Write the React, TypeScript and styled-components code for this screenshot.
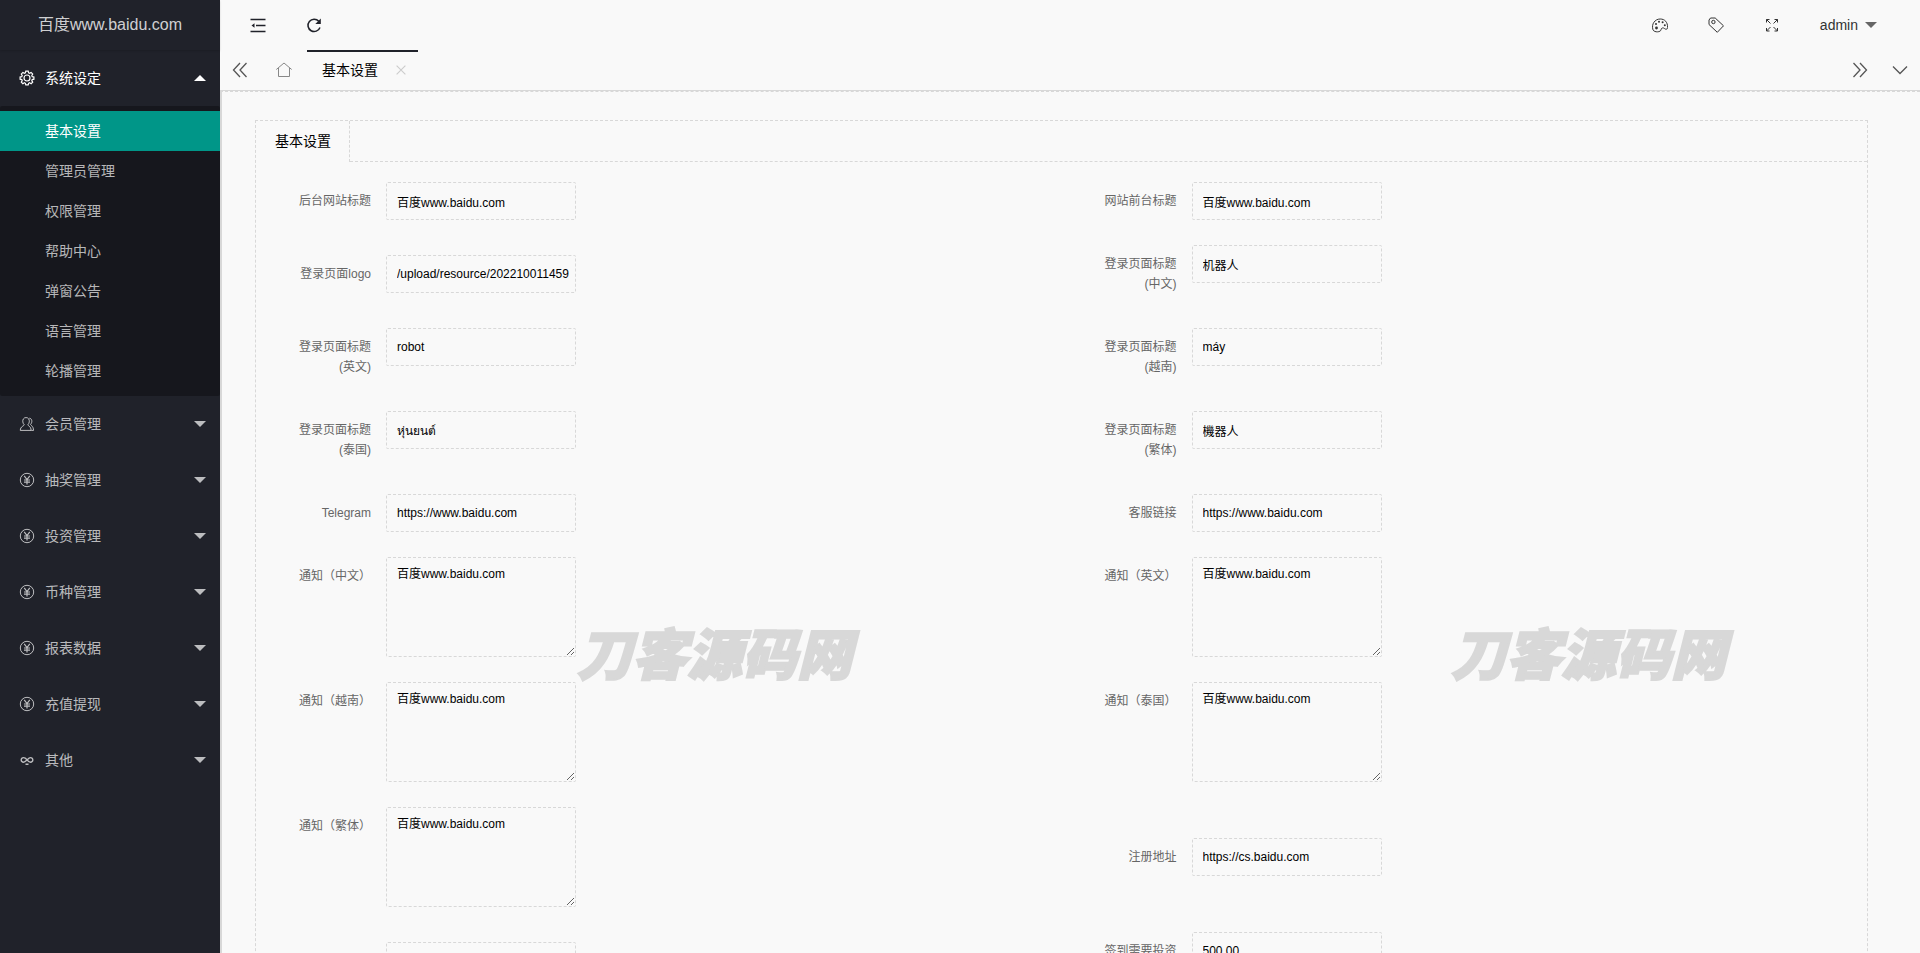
import React from "react";
import styled, { createGlobalStyle } from "styled-components";

const line = "#d8d8d8";
const ink = "#20222a";

const GlobalStyle = createGlobalStyle`
  *, *::before, *::after { box-sizing: border-box; }
  body {
    margin: 0;
    overflow: hidden;
    background: #f9f9f9;
    color: #333;
    font-family: "Liberation Sans", "Noto Sans CJK SC", sans-serif;
    font-size: 14px;
    line-height: 24px;
  }
  button, input, textarea { font: inherit; color: inherit; }
  button { border: 0; padding: 0; background: none; cursor: pointer; }
  a { color: inherit; text-decoration: none; }
  svg { display: block; }
`;

const Shell = styled.div`
  display: flex;
  height: 100vh;
`;

const Sidebar = styled.aside`
  flex: 0 0 220px;
  background: ${ink};
  color: rgba(255, 255, 255, 0.7);
`;

const Brand = styled.a`
  display: block;
  height: 50px;
  line-height: 49px;
  font-size: 16px;
  text-align: center;
  color: rgba(255, 255, 255, 0.8);
  box-shadow: 0 1px 2px rgba(0, 0, 0, 0.15);
`;

const Group = styled.button<{ $open?: boolean }>`
  display: flex;
  align-items: center;
  gap: 10px;
  width: 100%;
  height: 56px;
  padding: 0 14px 0 19px;
  text-align: left;
  color: ${(p) => (p.$open ? "#fff" : "inherit")};
`;

const GroupName = styled.span`
  flex: 1;
`;

const Caret = styled.span<{ $up?: boolean; $color?: string }>`
  width: 12px;
  height: 6px;
  background: ${(p) => p.$color ?? "currentColor"};
  clip-path: ${(p) =>
    p.$up ? "polygon(50% 0, 100% 100%, 0 100%)" : "polygon(0 0, 100% 0, 50% 100%)"};
`;

const Submenu = styled.nav`
  padding: 5px 0;
  background: rgba(0, 0, 0, 0.3);
  border-radius: 2px;
`;

const SubLink = styled.a<{ $active?: boolean }>`
  display: block;
  height: 40px;
  line-height: 40px;
  padding-left: 45px;
  color: ${(p) => (p.$active ? "#fff" : "inherit")};
  background: ${(p) => (p.$active ? "#009688" : "transparent")};
`;

const Page = styled.div`
  flex: 1;
  min-width: 0;
  display: flex;
  flex-direction: column;
`;

const Header = styled.header`
  display: flex;
  justify-content: space-between;
  height: 50px;
  padding: 0 15px;
`;

const Tools = styled.div`
  display: flex;
  gap: 10px;
  color: ${ink};
`;

const RightTools = styled.div`
  display: flex;
`;

const ToolButton = styled.button<{ $wide?: boolean }>`
  display: grid;
  place-items: center;
  width: ${(p) => (p.$wide ? 56 : 46)}px;
`;

const UserButton = styled.button`
  display: flex;
  align-items: center;
  gap: 7px;
  padding: 0 28px 0 20px;
`;

const TabBar = styled.div`
  display: flex;
  height: 41px;
  border-bottom: 1px solid ${line};
`;

const TabControl = styled.button<{ $w?: number }>`
  display: grid;
  place-items: center;
  width: ${(p) => p.$w ?? 40}px;
  color: #555;
`;

const OpenTab = styled.div`
  display: flex;
  align-items: center;
  justify-content: space-between;
  width: 111px;
  padding: 0 12px 2px 15px;
  border-top: 2px solid ${ink};
  color: #000;
`;

const Spacer = styled.div`
  flex: 1;
`;

const Main = styled.main`
  position: relative;
  flex: 1;
  min-height: 0;
  overflow: auto;
  scrollbar-width: none;
  padding: 28px 52px 30px 33px;
  border-top: 1px dashed ${line};
  border-left: 2px solid ${line};
`;

const Panel = styled.section`
  border: 1px dashed ${line};
`;

const PanelTabs = styled.div`
  display: flex;
  height: 41px;
`;

const PanelTab = styled.button`
  padding: 0 18px 2px 19px;
  border-right: 1px dashed ${line};
  color: #000;
`;

const PanelTabsRest = styled.div`
  flex: 1;
  border-bottom: 1px dashed ${line};
`;

const Form = styled.form`
  display: flex;
  flex-direction: column;
  gap: 25px;
  padding: 20px;
  font-size: 12px;
  line-height: 20px;
`;

const Row = styled.div`
  display: grid;
  grid-template-columns: 1fr 1fr;
  column-gap: 40px;
  align-items: center;
`;

const Field = styled.div`
  display: flex;
  align-items: flex-start;
`;

const Label = styled.label`
  width: 110px;
  padding: 9px 15px;
  text-align: right;
  color: #666;
`;

const TextInput = styled.input`
  width: 190px;
  height: 38px;
  padding: 0 0 0 10px;
  border: 1px dashed ${line};
  border-radius: 2px;
  background: transparent;
  color: #000;
  outline: none;
`;

const TextBox = styled.textarea`
  display: block;
  width: 190px;
  height: 100px;
  padding: 6px 10px;
  border: 1px dashed ${line};
  border-radius: 2px;
  background: transparent;
  color: #000;
  resize: vertical;
  outline: none;
`;

const Watermark = styled.div<{ $left: number }>`
  position: absolute;
  top: 519px;
  left: ${(p) => p.$left}px;
  font: italic 900 55px/80px "Noto Sans CJK SC", sans-serif;
  -webkit-text-stroke: 2px ${line};
  color: ${line};
  white-space: nowrap;
  pointer-events: none;
`;

const Icon = ({ size = 16, w = 1, children }: { size?: number; w?: number; children: React.ReactNode }) => (
  <svg width={size} height={size} viewBox="0 0 16 16" fill="none" stroke="currentColor" strokeWidth={w} aria-hidden>
    {children}
  </svg>
);

const GearIcon = () => (
  <Icon w={1.2}>
    <circle cx="8" cy="8" r="3" />
    <path d="M6.8 1.2h2.4l.4 1.7 1 .4 1.5-.9 1.6 1.7-.9 1.4.4 1.1 1.7.3v2.3l-1.7.4-.4 1 .9 1.5-1.6 1.6-1.5-.9-1 .5-.4 1.6H6.8l-.4-1.6-1-.5-1.5.9-1.6-1.6.9-1.5-.4-1-1.7-.4V6.9l1.7-.3.4-1.1-.9-1.4 1.6-1.7 1.5.9 1-.4z" />
  </Icon>
);

const UserIcon = () => (
  <Icon>
    <path d="M5.200 8.700C3.600 7.200 3.400 4.600 4.300 3 5.400 1.100 8.700 1.100 9.800 3c.9 1.600.7 4.200-.9 5.700 0 1.300 3.200 1.600 3.200 5.700H1.300c0-4.100 3.900-4.400 3.900-5.700z" />
    <path d="M10.300 2.200c2.600.1 3.500 3.800 1.300 6.100 0 1.400 2.900 1.500 2.900 6.100h-2.200" />
  </Icon>
);

const YenIcon = () => (
  <Icon>
    <circle cx="8" cy="8" r="6.700" />
    <path d="M5.200 3.900 8 7.600l2.800-3.700M8 7.600v4.800M5 8h6M5 10.200h6" strokeWidth="1.200" />
  </Icon>
);

const LinkIcon = () => (
  <Icon w={1.4}>
    <path d="M8 7.800C6.800 6.300 5.900 5.600 4.500 5.600a2.300 2.300 0 1 0 0 4.600C6.700 10.200 9.300 5.600 11.500 5.600a2.300 2.300 0 1 1 0 4.600C10.100 10.200 9.200 9.400 8 7.800M6.500 12.300h3" />
  </Icon>
);

const IndentIcon = () => (
  <Icon w={1.3}>
    <path d="M.5 2.500h15M6 8.500h9.500M.5 14.500h15" />
    <path d="M4.500 6.300v4.400L1.500 8.500z" fill="currentColor" stroke="none" />
  </Icon>
);

const RefreshIcon = () => (
  <Icon w={1.5}>
    <path d="M12.800 4.200A6.200 6.200 0 1 0 14 10.500" />
    <path d="M14.800 1.500v5.500H9.300z" fill="currentColor" stroke="none" />
  </Icon>
);

const PaletteIcon = () => (
  <Icon>
    <path d="M1 12.900C-.9 7 3 2 8.200 2c4.600 0 7.500 3.100 7.400 8.500 0 2.300-2.300 1.900-3.200 1-1.100-1.100-3.200-.6-3.300 1C8.900 15.400 2.500 15.700 1 12.900z" />
    <g fill="currentColor" stroke="none">
      <circle cx="4.500" cy="11" r="1.400" />
      <circle cx="4" cy="7" r="1" />
      <circle cx="7" cy="4.800" r="1" />
      <circle cx="10.600" cy="5.200" r="1" />
      <circle cx="12.800" cy="8.200" r="1" />
    </g>
  </Icon>
);

const TagIcon = () => (
  <Icon>
    <path d="M1 3 2.500 1h4.700l8.300 7.800-6.200 6.500L1 7.500z" strokeLinejoin="round" />
    <circle cx="5.400" cy="5" r="1.700" />
  </Icon>
);

const ExpandIcon = () => (
  <Icon>
    <path d="M2.500 5.500v-3h3M2.500 2.500l4 4M10.500 2.500h3v3M13.500 2.500l-4 4M2.500 11v3h3M2.500 14l4-4M13.500 11v3h-3M13.500 14l-4-4" />
  </Icon>
);

const HomeIcon = () => (
  <Icon>
    <path d="M.3 7.500 8 1l7.700 6.500M2.500 6v8.500h11V6" stroke="#888" />
  </Icon>
);

type FieldData = { name: string; label: string; value: string; area?: boolean };

const rows: FieldData[][] = [
  [
    { name: "adminTitle", label: "后台网站标题", value: "百度www.baidu.com" },
    { name: "siteTitle", label: "网站前台标题", value: "百度www.baidu.com" },
  ],
  [
    { name: "logo", label: "登录页面logo", value: "/upload/resource/202210011459" },
    { name: "titleZh", label: "登录页面标题(中文)", value: "机器人" },
  ],
  [
    { name: "titleEn", label: "登录页面标题(英文)", value: "robot" },
    { name: "titleVi", label: "登录页面标题(越南)", value: "máy" },
  ],
  [
    { name: "titleTh", label: "登录页面标题(泰国)", value: "หุ่นยนต์" },
    { name: "titleHant", label: "登录页面标题(繁体)", value: "機器人" },
  ],
  [
    { name: "telegram", label: "Telegram", value: "https://www.baidu.com" },
    { name: "service", label: "客服链接", value: "https://www.baidu.com" },
  ],
  [
    { name: "noticeZh", label: "通知（中文）", value: "百度www.baidu.com", area: true },
    { name: "noticeEn", label: "通知（英文）", value: "百度www.baidu.com", area: true },
  ],
  [
    { name: "noticeVi", label: "通知（越南）", value: "百度www.baidu.com", area: true },
    { name: "noticeTh", label: "通知（泰国）", value: "百度www.baidu.com", area: true },
  ],
  [
    { name: "noticeHant", label: "通知（繁体）", value: "百度www.baidu.com", area: true },
    { name: "register", label: "注册地址", value: "https://cs.baidu.com" },
  ],
  [
    { name: "extra", label: "", value: "" },
    { name: "signIn", label: "签到需要投资金额", value: "500.00" },
  ],
];

const subItems = ["基本设置", "管理员管理", "权限管理", "帮助中心", "弹窗公告", "语言管理", "轮播管理"];

const groups: [string, React.FC][] = [
  ["会员管理", UserIcon],
  ["抽奖管理", YenIcon],
  ["投资管理", YenIcon],
  ["币种管理", YenIcon],
  ["报表数据", YenIcon],
  ["充值提现", YenIcon],
  ["其他", LinkIcon],
];

const FormField = ({ name, label, value, area }: FieldData) => (
  <Field>
    <Label htmlFor={name}>{label}</Label>
    {area ? (
      <TextBox id={name} name={name} defaultValue={value} spellCheck={false} />
    ) : (
      <TextInput id={name} name={name} defaultValue={value} spellCheck={false} />
    )}
  </Field>
);

export default function App() {
  return (
    <>
      <GlobalStyle />
      <Shell>
        <Sidebar>
          <Brand href="#">百度www.baidu.com</Brand>
          <Group $open aria-expanded="true">
            <GearIcon />
            <GroupName>系统设定</GroupName>
            <Caret $up />
          </Group>
          <Submenu>
            {subItems.map((item, i) => (
              <SubLink key={item} href="#" $active={i === 0}>
                {item}
              </SubLink>
            ))}
          </Submenu>
          {groups.map(([name, Glyph]) => (
            <Group key={name} aria-expanded="false">
              <Glyph />
              <GroupName>{name}</GroupName>
              <Caret />
            </Group>
          ))}
        </Sidebar>
        <Page>
          <Header>
            <Tools>
              <ToolButton aria-label="收起菜单"><IndentIcon /></ToolButton>
              <ToolButton aria-label="刷新"><RefreshIcon /></ToolButton>
            </Tools>
            <RightTools>
              <ToolButton $wide aria-label="主题"><PaletteIcon /></ToolButton>
              <ToolButton $wide aria-label="便签"><TagIcon /></ToolButton>
              <ToolButton $wide aria-label="全屏"><ExpandIcon /></ToolButton>
              <UserButton>
                admin
                <Caret $color="#666" />
              </UserButton>
            </RightTools>
          </Header>
          <TabBar>
            <TabControl aria-label="向左">
              <Icon w={1.3}><path d="M8 1 1.500 8 8 15M14.500 1 8 8l6.500 7" /></Icon>
            </TabControl>
            <TabControl $w={47} aria-label="主页"><HomeIcon /></TabControl>
            <OpenTab>
              基本设置
              <TabControl $w={10} aria-label="关闭标签">
                <Icon size={10} w={1.8}><path d="m1 1 14 14M15 1 1 15" stroke="#ccc" /></Icon>
              </TabControl>
            </OpenTab>
            <Spacer />
            <TabControl aria-label="向右">
              <Icon w={1.3}><path d="m1.500 1 6.500 7-6.500 7M8 1l6.500 7L8 15" /></Icon>
            </TabControl>
            <TabControl aria-label="更多操作">
              <Icon w={1.3}><path d="m1 4.500 7 7 7-7" /></Icon>
            </TabControl>
          </TabBar>
          <Main>
            <Panel>
              <PanelTabs>
                <PanelTab>基本设置</PanelTab>
                <PanelTabsRest />
              </PanelTabs>
              <Form>
                {rows.map((row) => (
                  <Row key={row[0].name}>
                    {row.map((field) => (
                      <FormField key={field.name} {...field} />
                    ))}
                  </Row>
                ))}
              </Form>
            </Panel>
            <Watermark $left={355} aria-hidden>刀客源码网</Watermark>
            <Watermark $left={1229} aria-hidden>刀客源码网</Watermark>
          </Main>
        </Page>
      </Shell>
    </>
  );
}
